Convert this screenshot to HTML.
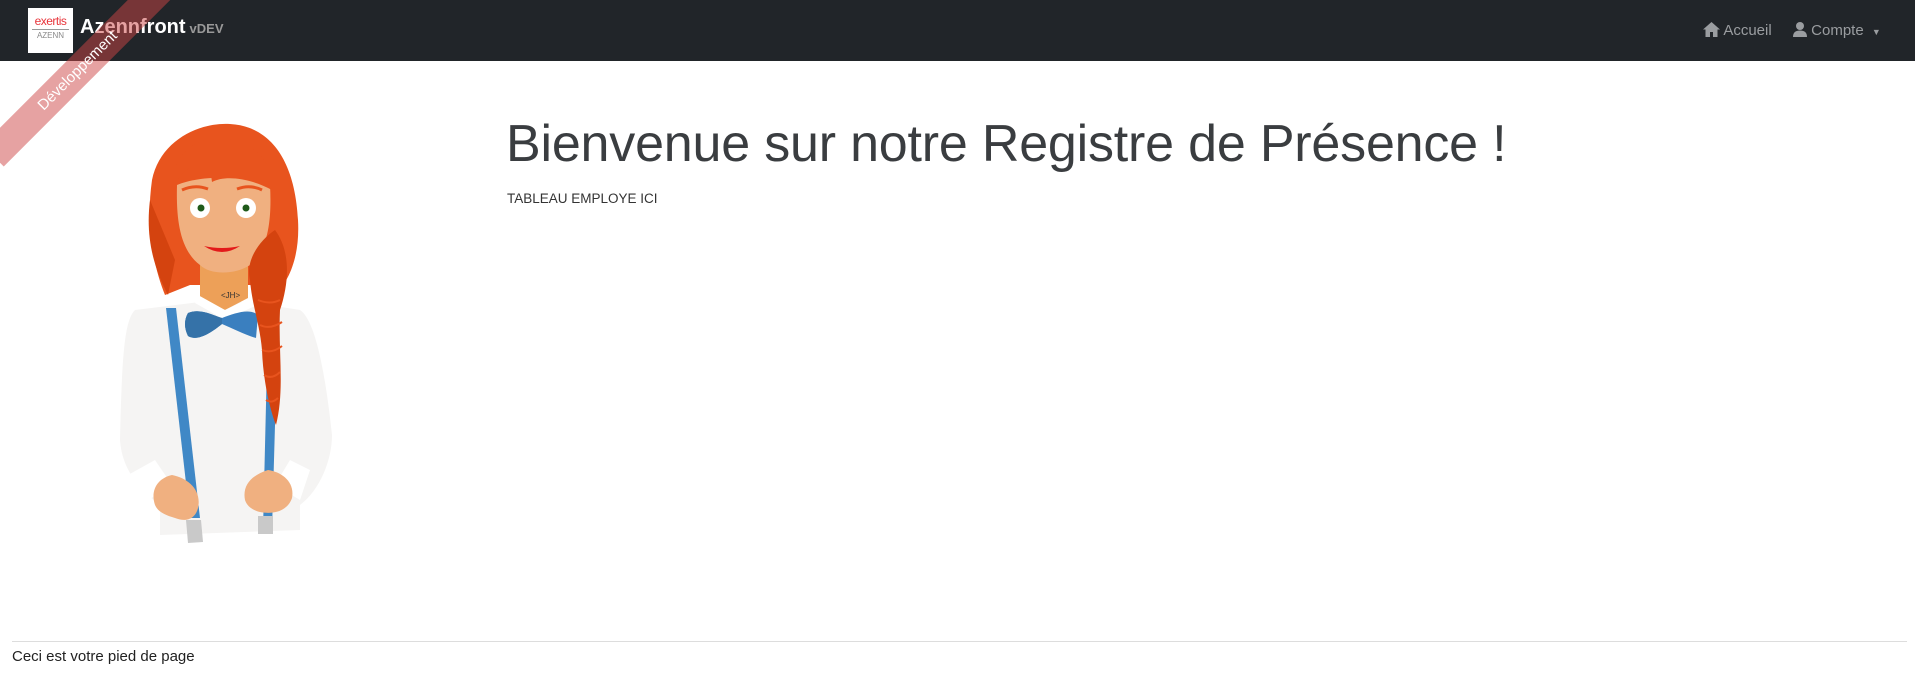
<!DOCTYPE html>
<html><head><meta charset="utf-8"><style>
*{margin:0;padding:0;box-sizing:border-box}
body{width:1915px;height:697px;background:#fff;font-family:"Liberation Sans",sans-serif;position:relative;overflow:hidden;color:#212529}
.nav{position:absolute;left:0;top:0;width:1915px;height:61px;background:#212529}
.logo{position:absolute;left:28px;top:8px;width:45px;height:45px;background:#fff;text-align:center}
.logo .a{color:#e8343a;font-size:12px;margin-top:6px;letter-spacing:-0.5px}
.logo .l{height:1px;background:#999;margin:1px 4px}
.logo .b{color:#888;font-size:8px}
.brand{position:absolute;left:80px;top:16px;color:#fff;font-weight:bold;font-size:20px}
.brand small{color:#999;font-size:13px;margin-left:4px}
.right{position:absolute;top:22px;color:#9a9da0;font-size:15px}
.ribbon{position:absolute;left:-42px;top:56px;width:240px;height:30px;background:rgba(205,70,70,0.5);transform:rotate(-45deg);color:#fff;font-size:15px;text-align:center;line-height:30px}
h1{position:absolute;left:506px;top:114px;font-weight:300;font-size:52px;color:#3a3d40;white-space:nowrap;letter-spacing:-0.2px}
.sub{position:absolute;left:507px;top:191px;font-size:13.5px;color:#333}
.hr{position:absolute;left:12px;top:641px;width:1895px;height:1px;background:#ddd}
.foot{position:absolute;left:12px;top:648px;font-size:15px;color:#222}
</style></head><body>
<div class="nav">
<div class="logo"><div class="a">exertis</div><div class="l"></div><div class="b">AZENN</div></div>
<div class="brand">Azennfront<small>vDEV</small></div>
<div class="right" style="left:1703px"><svg width="17" height="15" viewBox="0 0 17 15" style="vertical-align:-2px"><path d="M8.5 0L0 7.5h2.5V15h4.5v-5h3v5h4.5V7.5H17z" fill="#9a9da0"/></svg> Accueil</div>
<div class="right" style="left:1793px"><svg width="14" height="15" viewBox="0 0 14 15" style="vertical-align:-2px"><circle cx="7" cy="4" r="4" fill="#9a9da0"/><path d="M0 15c0-5 3-6.5 7-6.5s7 1.5 7 6.5z" fill="#9a9da0"/></svg> Compte <span style="font-size:9px;margin-left:4px">▼</span></div>
</div>
<div class="ribbon">Développement</div>
<svg style="position:absolute;left:100px;top:110px" width="260" height="440" viewBox="0 0 260 440">
<!-- shirt -->
<path d="M35 200 C25 210 22 240 20 330 C22 360 40 380 60 395 L60 425 L200 420 L200 395 C220 380 232 350 232 325 C225 260 215 210 200 200 L150 192 L100 192 Z" fill="#f5f4f3"/>
<!-- hair back -->
<path d="M65 185 C55 160 45 120 52 70 C60 30 100 12 130 14 C170 16 195 50 198 110 C200 145 190 170 175 185 L150 175 L90 175 Z" fill="#e8541e"/>
<path d="M50 90 C45 130 55 160 68 185 L75 150 Z" fill="#d4430f"/>
<!-- neck -->
<path d="M100 150 L100 190 L125 200 L148 188 L148 150Z" fill="#eda058"/>
<!-- collar -->
<path d="M98 185 L125 200 L150 188 L155 196 L125 210 L95 193Z" fill="#fff"/>
<!-- face -->
<path d="M77 75 C76 110 80 140 100 155 C110 165 135 165 150 155 C168 140 172 110 170 75 C150 65 100 65 77 75Z" fill="#f0b080"/>
<!-- bangs -->
<path d="M72 82 C80 60 95 50 110 58 L112 72 C125 65 150 68 172 80 C175 50 150 30 120 28 C90 28 70 50 72 82Z" fill="#e8541e"/>
<path d="M82 80 Q95 74 108 79" stroke="#e8541e" stroke-width="3" fill="none"/>
<path d="M137 79 Q150 74 162 80" stroke="#e8541e" stroke-width="3" fill="none"/>
<circle cx="100" cy="98" r="10" fill="#fff"/><circle cx="101" cy="98" r="3.5" fill="#1f5a1a"/>
<circle cx="146" cy="98" r="10" fill="#fff"/><circle cx="146" cy="98" r="3.5" fill="#1f5a1a"/>
<path d="M104 136 Q122 148 140 136 Q122 140 104 136Z" fill="#e31a1a"/>
<text x="121" y="188" font-size="8" fill="#333" font-family="Liberation Sans,sans-serif">&lt;JH&gt;</text>
<!-- suspenders -->
<path d="M66 198 L76 198 L100 408 L90 408Z" fill="#4088c6"/>
<path d="M168 210 L178 210 L172 420 L163 420Z" fill="#4088c6"/>
<!-- bowtie -->
<path d="M88 203 C100 198 112 205 122 208 C135 203 150 198 158 205 L156 228 C145 225 132 218 122 214 C112 222 98 232 88 226 C84 218 84 210 88 203Z" fill="#3a7fbf"/>
<path d="M88 203 C100 198 112 205 122 208 L122 214 C112 222 98 232 88 226 C84 218 84 210 88 203Z" fill="#3572a8"/>
<!-- braid -->
<path d="M150 170 C145 150 160 130 175 120 C190 140 190 170 180 200 C178 240 185 280 176 315 C170 300 163 270 162 240 C160 215 152 195 150 170Z" fill="#d4430f"/>
<path d="M158 190 Q170 195 180 190 M160 215 Q170 220 182 212 M162 240 Q172 244 182 236 M164 265 Q172 270 180 262 M166 290 Q172 294 178 288" stroke="#e8541e" stroke-width="2" fill="none"/>
<!-- cuffs -->
<path d="M28 365 L55 350 L72 375 L45 392Z" fill="#fff"/>
<path d="M190 350 L210 360 L200 390 L175 375Z" fill="#fff"/>
<!-- hands -->
<path d="M55 395 C50 380 58 368 72 365 C88 368 102 380 98 398 C95 410 85 412 75 408 C65 405 58 402 55 395Z" fill="#f0b080"/>
<path d="M145 390 C142 375 152 365 168 360 C182 362 195 372 192 388 C188 400 175 405 160 402 C152 400 147 396 145 390Z" fill="#f0b080"/>
<!-- clips -->
<path d="M86 410 L101 410 L103 432 L88 433Z" fill="#c9c9c9"/>
<rect x="158" y="406" width="15" height="18" fill="#c9c9c9"/>
</svg>
<h1>Bienvenue sur notre Registre de Présence !</h1>
<div class="sub">TABLEAU EMPLOYE ICI</div>
<div class="hr"></div>
<div class="foot">Ceci est votre pied de page</div>
</body></html>
